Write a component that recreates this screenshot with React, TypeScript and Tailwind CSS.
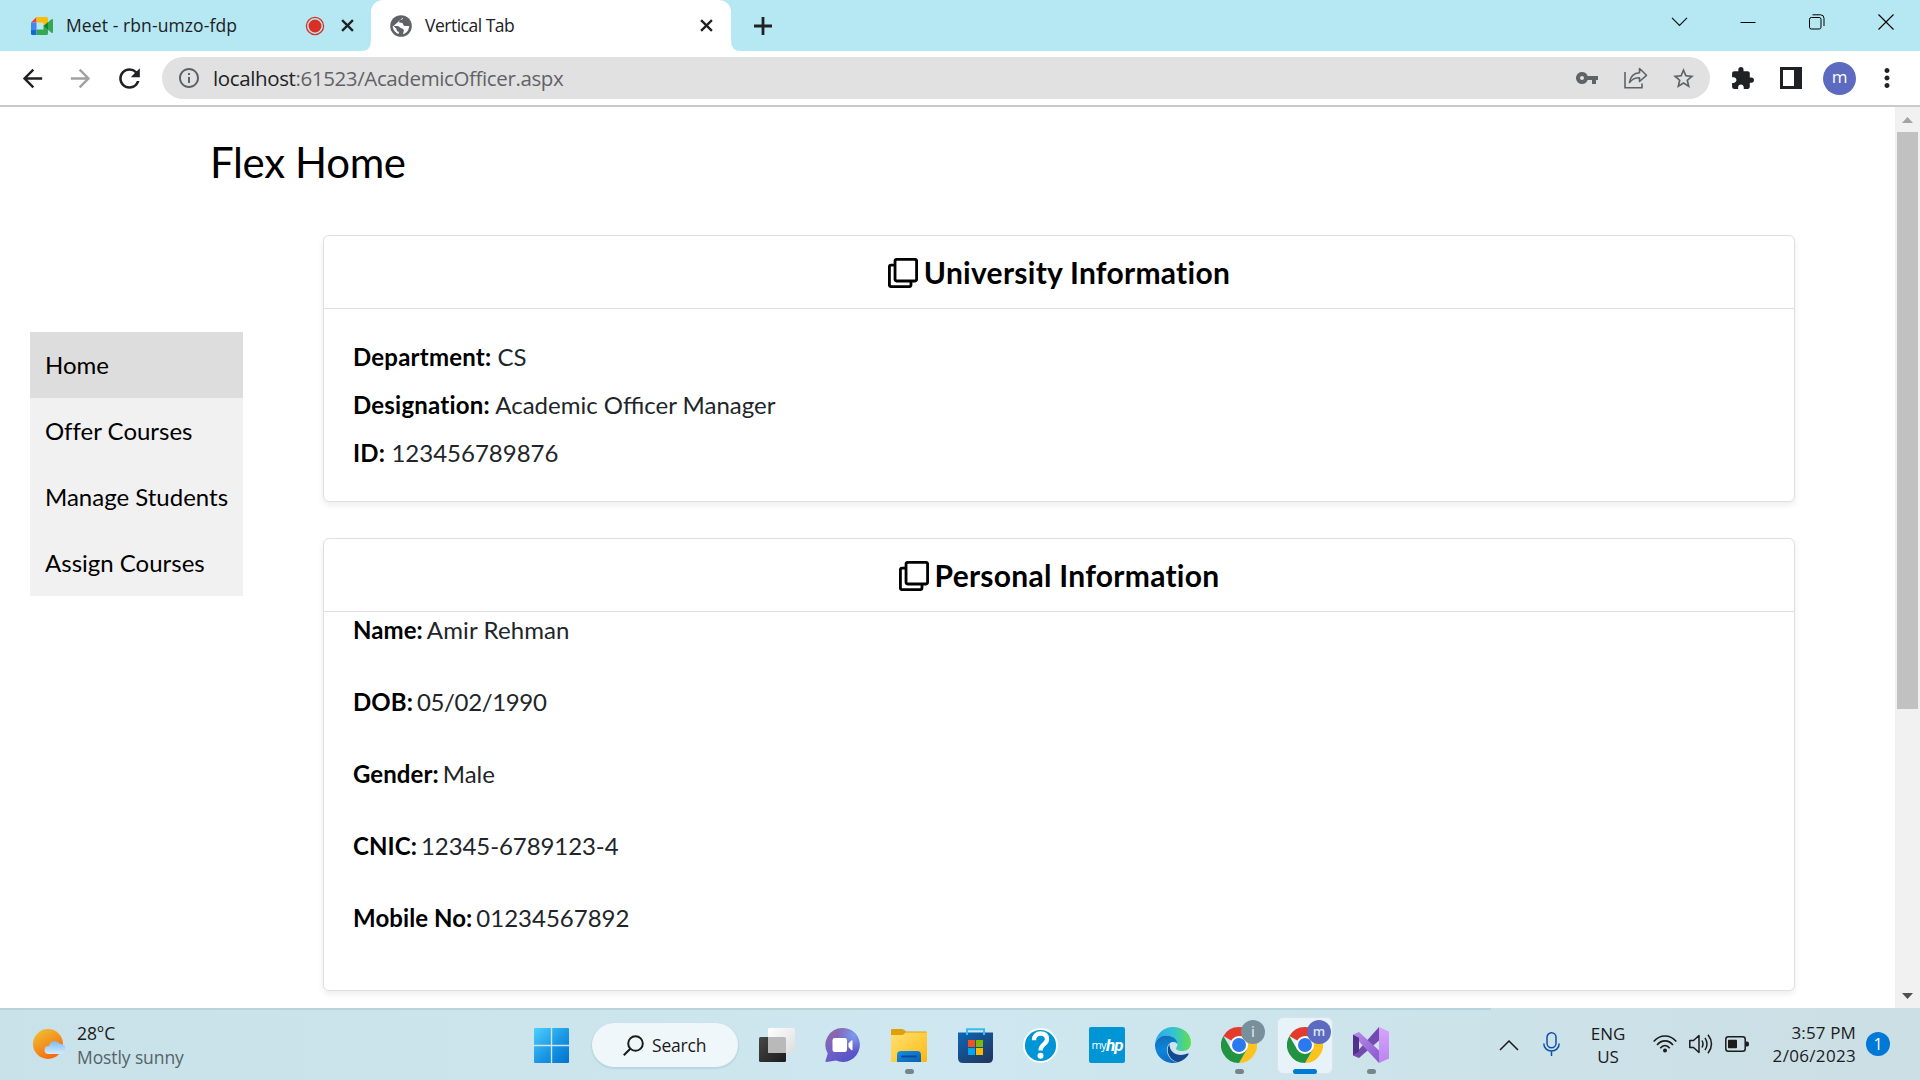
import React from "react";
import {
  MdArrowBack,
  MdArrowForward,
  MdRefresh,
  MdInfoOutline,
  MdVpnKey,
  MdStarBorder,
  MdExtension,
  MdMoreVert,
} from "react-icons/md";
import { FaRegClone } from "react-icons/fa";

const ui = "font-['Open_Sans','Noto_Sans',sans-serif]";

function CrossIcon({ size, stroke }: { size: number; stroke: number }) {
  return (
    <svg width={size} height={size} viewBox="0 0 12 12" className="shrink-0" fill="none" stroke="#202124" strokeWidth={stroke}>
      <path d="M1 1L11 11M11 1L1 11" />
    </svg>
  );
}

function MeetIcon() {
  return (
    <svg width="22" height="18" viewBox="0 0 22 18" className="shrink-0">
      <path d="M0 5.5L5.5 0V5.5Z" fill="#ea4335" />
      <path d="M0 5.5H5.5V12.5H0Z" fill="#4285f4" />
      <path d="M0 12.5H5.5V18H1.5A1.5 1.5 0 0 1 0 16.5Z" fill="#1967d2" />
      <path d="M5.5 0H15.5A1.5 1.5 0 0 1 17 1.5V6L12.5 9.5V5.5H5.5Z" fill="#fbbc04" />
      <path d="M5.5 12.5H12.5V9L17 12.5V16.5A1.5 1.5 0 0 1 15.5 18H5.5Z" fill="#34a853" />
      <path d="M12.5 9L20.5 2.2Q22 1.400 22 3V15Q22 16.600 20.500 15.800Z" fill="#34a853" />
      <path d="M12.500 9L17 5.200V12.800Z" fill="#188038" />
    </svg>
  );
}

function GlobeIcon() {
  return (
    <svg width="22" height="22" viewBox="0 0 22 22" className="shrink-0">
      <circle cx="11" cy="11" r="10.800" fill="#5f6368" />
      <path
        d="M13 2.500C13 4.500 11.500 4.800 9.800 5C8.800 5.200 8.800 7.500 10 7.800C11 8 12.800 7.500 13 9C13.200 10.800 14.500 11 16 11H19.300C19 15 16.500 18.200 13 19.200C13 17.500 14.500 16 13.500 14.500C12.500 13.300 11 13.600 10 12.500C9.200 11 7.500 11 6 11H2.700C2.800 14.500 5 17.800 8.800 19V16.800C7 16.500 6.500 15.500 6.500 14L3.500 11"
        fill="white"
      />
    </svg>
  );
}

function TabStrip() {
  return (
    <div className={"flex h-[51px] w-full items-center bg-[#b5e8f3] text-[18px] text-[#202124] " + ui}>
      <div className="flex h-full w-[371px] items-center pl-[31px]">
        <MeetIcon />
        <span className="ml-[13px] w-[239px] whitespace-nowrap text-[17.5px] tracking-[0.1px]">Meet - rbn-umzo-fdp</span>
        <svg width="20" height="20" viewBox="0 0 20 20" className="shrink-0">
          <circle cx="10" cy="10" r="8.600" fill="none" stroke="#d93025" strokeWidth="1.300" />
          <circle cx="10" cy="10" r="6.500" fill="#d93025" />
        </svg>
        <div className="ml-[16px]">
          <CrossIcon size={13} stroke={2.1} />
        </div>
      </div>
      <div className="relative flex h-full w-[360px] items-center rounded-t-[12px] bg-white pl-[19px]">
        <svg width="10" height="10" viewBox="0 0 10 10" className="absolute bottom-0 -left-[10px]">
          <path d="M10 0V10H0Q10 10 10 0Z" fill="white" />
        </svg>
        <svg width="10" height="10" viewBox="0 0 10 10" className="absolute -right-[10px] bottom-0">
          <path d="M0 0V10H10Q0 10 0 0Z" fill="white" />
        </svg>
        <GlobeIcon />
        <span className="ml-[13px] w-[275px] whitespace-nowrap text-[17.5px] tracking-[-0.5px]">Vertical Tab</span>
        <CrossIcon size={13} stroke={2.1} />
      </div>
      <svg width="18" height="18" viewBox="0 0 18 18" className="ml-[23px] shrink-0" stroke="#202124" strokeWidth="2.800">
        <path d="M9 0V18M0 9H18" />
      </svg>
      <div className="mb-[8px] ml-auto flex items-center pr-[26px]">
        <svg width="17" height="10" viewBox="0 0 17 10" fill="none" stroke="#111" strokeWidth="1.200">
          <path d="M1 0.800L8.500 8.500L16 0.800" />
        </svg>
        <svg width="16" height="16" viewBox="0 0 16 16" className="ml-[52px]" stroke="#000" strokeWidth="1">
          <path d="M0.500 8.500H15.500" />
        </svg>
        <svg width="16" height="16" viewBox="0 0 16 16" className="ml-[53px]" fill="none" stroke="#000" strokeWidth="1">
          <rect x="0.500" y="3.500" width="11.500" height="11.500" rx="1.800" />
          <path d="M3.500 0.800H11.500Q15 0.800 15 4.300V12" />
        </svg>
        <svg width="16" height="16" viewBox="0 0 16 16" className="ml-[53px]" stroke="#000" strokeWidth="1.100">
          <path d="M0.500 0.500L15.500 15.500M15.500 0.500L0.500 15.500" />
        </svg>
      </div>
    </div>
  );
}

function Toolbar() {
  return (
    <div className={"flex h-[56px] w-full items-center border-b-2 border-[#cacaca] bg-white text-[#202124] " + ui}>
      <MdArrowBack size={29} className="ml-[18px] shrink-0" />
      <MdArrowForward size={29} className="ml-[19px] shrink-0 text-[#a0a1a3]" />
      <MdRefresh size={31} className="ml-[19px] shrink-0" />
      <div className="ml-[17px] flex h-[42px] w-[1548px] items-center rounded-full bg-[#e1e1e1] pl-[15px] text-[#5f6368]">
        <MdInfoOutline size={24} className="shrink-0" />
        <span className="ml-[12px] whitespace-nowrap text-[20.5px] tracking-[-0.38px]">
          <span className="text-[#202124]">localhost</span>:61523/AcademicOfficer.aspx
        </span>
        <MdVpnKey size={24} className="ml-auto shrink-0" />
        <svg width="24" height="22" viewBox="0 0 24 22" className="ml-[25px] shrink-0" fill="none" stroke="#5f6368" strokeWidth="1.600">
          <path d="M1 5V20.800H18V16.500" />
          <path d="M5.500 15.500C6.500 9 10 6 15.500 5.700V1.500L22.500 8.300L15.500 14.500V10.700C11 10.700 8 12 5.500 15.500Z" strokeLinejoin="round" />
        </svg>
        <MdStarBorder size={25} className="mr-[14px] ml-[23px] shrink-0" />
      </div>
      <MdExtension size={25} className="ml-[20px] shrink-0" />
      <svg width="22" height="22" viewBox="0 0 22 22" className="ml-[25px] shrink-0">
        <path d="M0 0H22V22H0ZM3 3V19H14V3Z" fill="#202124" fillRule="evenodd" />
      </svg>
      <div className="ml-[21px] flex size-[33px] items-center justify-center rounded-full bg-[#5c6bc0] pb-[2px] text-[17px] text-white">m</div>
      <MdMoreVert size={30} className="ml-[16px] shrink-0" />
    </div>
  );
}

const plain = "[font-variant-ligatures:none]";

function Field({ label, value, tracking = "" }: { label: string; value: string; tracking?: string }) {
  return (
    <p className="h-[48px] whitespace-nowrap">
      <span className={"font-bold tracking-[0.22px] text-black " + plain}>{label}</span> <span className={tracking}>{value}</span>
    </p>
  );
}

function TallField({ label, value, tracking = "" }: { label: string; value: string; tracking?: string }) {
  return (
    <p className="flex h-[72px] gap-[4px] whitespace-nowrap">
      <span className={"font-bold tracking-[0.08px] text-black " + plain}>{label}</span>
      <span className={tracking}>{value}</span>
    </p>
  );
}

function CardHeader({ title }: { title: string }) {
  return (
    <div className="flex h-[73px] items-center justify-center gap-[6px] border-b border-[#dfdfdf] text-black">
      <FaRegClone size={30} className="mt-px" />
      <h3 className={"text-[30px] leading-[36px] font-bold tracking-[0.27px] " + plain}>{title}</h3>
    </div>
  );
}

const cardClass = "w-[1472px] rounded-[6px] border border-[#dfdfdf] bg-white shadow-[0_3px_6px_rgba(0,0,0,0.075)]";

function Page() {
  const links = ["Home", "Offer Courses", "Manage Students", "Assign Courses"];
  return (
    <div className="flex h-[901px] w-full overflow-hidden bg-white font-['Lato',sans-serif] text-[24px] leading-[36px] text-[#212529]">
      <div className="w-[323px] shrink-0">
        <h1 className="ml-[210px] pt-[24px] text-[42px] leading-[63px] tracking-[-0.35px] whitespace-nowrap text-black">Flex Home</h1>
        <nav className={"mt-[138px] ml-[30px] w-[213px] bg-[#f1f1f1] text-black " + plain}>
          {links.map((l, i) => (
            <div key={l} className={"flex h-[66px] items-center pl-[15px] whitespace-nowrap " + (i === 0 ? "bg-[#ddd]" : "")}>
              {l}
            </div>
          ))}
        </nav>
      </div>
      <main className="flex flex-1 flex-col gap-[36px] pt-[128px]">
        <section className={cardClass + " h-[267px]"}>
          <CardHeader title="University Information" />
          <div className="pt-[30px] pl-[29px]">
            <Field label="Department:" value="CS" />
            <Field label="Designation:" value="Academic Officer Manager" />
            <Field label="ID:" value="123456789876" />
          </div>
        </section>
        <section className={cardClass + " h-[453px]"}>
          <CardHeader title="Personal Information" />
          <div className="pl-[29px]">
            <TallField label="Name:" value="Amir Rehman" tracking="tracking-[0.12px]" />
            <TallField label="DOB:" value="05/02/1990" tracking="tracking-[-0.35px]" />
            <TallField label="Gender:" value="Male" />
            <TallField label="CNIC:" value="12345-6789123-4" tracking="tracking-[-0.08px]" />
            <TallField label="Mobile No:" value="01234567892" />
          </div>
        </section>
      </main>
      <div className="flex w-[25px] flex-col items-center bg-[#f1f1f1]">
        <svg width="11" height="6" viewBox="0 0 11 6" className="mt-[10px] shrink-0">
          <path d="M5.500 0L11 6H0Z" fill="#a3a3a3" />
        </svg>
        <div className="mt-[9px] h-[577px] w-[21px] bg-[#c1c1c1]" />
        <svg width="11" height="6" viewBox="0 0 11 6" className="mt-auto mb-[9px] shrink-0">
          <path d="M0 0H11L5.500 6Z" fill="#505050" />
        </svg>
      </div>
    </div>
  );
}

function WeatherIcon() {
  return (
    <svg width="32" height="32" viewBox="0 0 32 32" className="shrink-0">
      <defs>
        <linearGradient id="sun" x1="0.1" y1="0" x2="0.7" y2="1">
          <stop offset="0" stopColor="#efc233" />
          <stop offset="1" stopColor="#f6660c" />
        </linearGradient>
        <linearGradient id="cloud" x1="0" y1="0" x2="0" y2="1">
          <stop offset="0" stopColor="#7cbcf7" />
          <stop offset="1" stopColor="#d3ebff" />
        </linearGradient>
      </defs>
      <circle cx="15" cy="15" r="15" fill="url(#sun)" />
      <path d="M15.500 25A4 4 0 0 1 15.500 17H16A6 5.800 0 0 1 27 15A5 5 0 0 1 28 25Z" fill="url(#cloud)" />
    </svg>
  );
}

function StartIcon() {
  return (
    <svg width="35" height="35" viewBox="0 0 35 35">
      <defs>
        <linearGradient id="win" x1="0" y1="0" x2="1" y2="1">
          <stop offset="0" stopColor="#4cd0ff" />
          <stop offset="0.550" stopColor="#1a96e2" />
          <stop offset="1" stopColor="#0072cf" />
        </linearGradient>
      </defs>
      <path d="M1 0H16.800V16.800H0V1A1 1 0 0 1 1 0ZM18.200 0H34A1 1 0 0 1 35 1V16.800H18.200ZM0 18.200H16.800V35H1A1 1 0 0 1 0 34ZM18.200 18.200H35V34A1 1 0 0 1 34 35H18.200Z" fill="url(#win)" />
    </svg>
  );
}

function TaskViewIcon() {
  return (
    <svg width="36" height="34" viewBox="0 0 36 34">
      <defs>
        <linearGradient id="tvDark" x1="0" y1="0" x2="1" y2="1">
          <stop offset="0" stopColor="#474747" />
          <stop offset="1" stopColor="#1c1c1c" />
        </linearGradient>
        <linearGradient id="tvLight" x1="0" y1="0" x2="1" y2="1">
          <stop offset="0" stopColor="#ffffff" />
          <stop offset="1" stopColor="#dddddd" />
        </linearGradient>
      </defs>
      <rect x="0" y="9" width="27" height="25" rx="1.500" fill="url(#tvDark)" />
      <rect x="9" y="0" width="27" height="25" rx="1.500" fill="url(#tvLight)" />
      <path d="M9 9H25.500A1.500 1.500 0 0 1 27 10.500V25H10.500A1.500 1.500 0 0 1 9 23.500Z" fill="#b9b9b9" />
    </svg>
  );
}

function ChatIcon() {
  return (
    <svg width="35" height="34" viewBox="0 0 35 34" className="mr-[2px]">
      <defs>
        <linearGradient id="chat" x1="0.100" y1="0.100" x2="0.700" y2="1">
          <stop offset="0" stopColor="#9467a8" />
          <stop offset="0.500" stopColor="#6f62c6" />
          <stop offset="1" stopColor="#5252c6" />
        </linearGradient>
        <radialGradient id="chatGlow" cx="0.850" cy="0.200" r="0.500">
          <stop offset="0" stopColor="#7f9df2" />
          <stop offset="1" stopColor="#7f9df2" stopOpacity="0" />
        </radialGradient>
      </defs>
      <path d="M17.500 0A17 17 0 1 1 11 32.600L1.500 34Q0 34 0.600 32.600L2.700 25.500A17 17 0 0 1 17.500 0Z" fill="url(#chat)" />
      <circle cx="17.500" cy="17" r="17" fill="url(#chatGlow)" />
      <rect x="7.500" y="10" width="14.500" height="14" rx="2.200" fill="white" />
      <path d="M23.500 15.500L26.300 12.500Q27.500 11.800 27.500 13V21.500Q27.500 22.700 26.300 22L23.500 19Z" fill="white" />
    </svg>
  );
}

function FolderIcon() {
  return (
    <svg width="36" height="34" viewBox="0 0 36 34">
      <defs>
        <linearGradient id="fold" x1="0" y1="0" x2="1" y2="1">
          <stop offset="0" stopColor="#ffe071" />
          <stop offset="0.600" stopColor="#ffca3a" />
          <stop offset="1" stopColor="#fbb60f" />
        </linearGradient>
        <linearGradient id="foldBlue" x1="0" y1="0" x2="1" y2="1">
          <stop offset="0" stopColor="#1490df" />
          <stop offset="1" stopColor="#0a5fb5" />
        </linearGradient>
      </defs>
      <path d="M0 2Q0 1 1 1H11Q13 1 15 3.500H35Q36 3.500 36 5V10H0Z" fill="#e09f04" />
      <path d="M0 7H10.500Q12.500 7 14.500 4.500H36V32.500Q36 34 35 34H1Q0 34 0 32.500Z" fill="url(#fold)" />
      <path d="M6 34V27Q6 23 10 23H26Q30 23 30 27V34Z" fill="url(#foldBlue)" />
      <path d="M11 28.500H25" stroke="#0a4a94" strokeWidth="1.800" strokeLinecap="round" />
    </svg>
  );
}

function StoreIcon() {
  return (
    <svg width="35" height="35" viewBox="0 0 35 35">
      <defs>
        <linearGradient id="bag" x1="0" y1="0" x2="0.800" y2="1">
          <stop offset="0" stopColor="#0b67b8" />
          <stop offset="1" stopColor="#22375f" />
        </linearGradient>
      </defs>
      <path d="M0 4.500H35V30Q35 35 30 35H5Q0 35 0 30Z" fill="url(#bag)" />
      <path d="M9 7V1.200H26V7" fill="none" stroke="#35bdf0" strokeWidth="2" />
      <path d="M10 12H17V19H10Z" fill="#f25022" />
      <path d="M18 12H25V19H18Z" fill="#7fba00" />
      <path d="M10 20H17V27H10Z" fill="#00a4ef" />
      <path d="M18 20H25V27H18Z" fill="#ffb900" />
    </svg>
  );
}

function HelpIcon() {
  return (
    <svg width="35" height="35" viewBox="0 0 35 35" className="mr-px">
      <circle cx="17.500" cy="17.500" r="16.500" fill="#0096d6" stroke="white" strokeWidth="1.800" />
      <path d="M11 12.300C11 7.800 13.500 5.500 17.500 5.500C21.500 5.500 24 7.500 24 11.300C24 16.500 17.500 16 17.500 22.500" fill="none" stroke="white" strokeWidth="4.300" />
      <circle cx="17.500" cy="27.800" r="3" fill="white" />
    </svg>
  );
}

function EdgeIcon() {
  return (
    <svg width="36" height="36" viewBox="0 0 36 36">
      <defs>
        <linearGradient id="edTop" x1="0" y1="0.500" x2="1" y2="0.500">
          <stop offset="0" stopColor="#2ba7e8" />
          <stop offset="0.500" stopColor="#33c2d6" />
          <stop offset="1" stopColor="#5fe04a" />
        </linearGradient>
        <linearGradient id="edLeft" x1="0.300" y1="0" x2="0.500" y2="1">
          <stop offset="0" stopColor="#0f6fb6" />
          <stop offset="0.500" stopColor="#0a86dc" />
          <stop offset="1" stopColor="#0f6cc6" />
        </linearGradient>
      </defs>
      <path d="M0 17C1 7 8.500 0 18 0C28.500 0 36 7 36 15.500C36 20.500 32.500 24 27.500 24C23.500 24 21 22.800 21 21.500C21 20.500 22.500 20 22.500 17.500C22.500 12.500 17 8.500 11 8.500C6 8.500 2 11.500 0 17Z" fill="url(#edTop)" />
      <path d="M0 17C2 11.500 6 8.500 11 8.500C17.500 8.500 22.500 12.500 22.500 17C20.500 13.500 13.500 14 12 21C11 28 16 34.500 23 35.300C20 36.200 17 36 15 35.700C6 34.200 -0.500 26.500 0 17Z" fill="url(#edLeft)" />
      <path d="M14.500 17C10 23 14 33.500 23 35.300C27.500 34 31.500 31 33.500 27.500C34 26.500 33.300 26.200 32.500 26.600C25 30 14.500 27.500 14.500 17Z" fill="#114a8f" />
    </svg>
  );
}

function ChromeIcon() {
  return (
    <svg width="36" height="36" viewBox="0 0 36 36">
      <path d="M18 18L2.410 9A18 18 0 0 1 33.590 9Z" fill="#e33b2e" />
      <path d="M18 9H33.590A18 18 0 0 1 18 36L25.800 22.500Z" fill="#fcc31e" />
      <path d="M10.200 22.500L2.410 9A18 18 0 0 0 18 36L25.800 22.500Z" fill="#229342" />
      <circle cx="18" cy="18" r="9" fill="white" />
      <circle cx="18" cy="18" r="7" fill="#2a79ee" />
    </svg>
  );
}

function VisualStudioIcon() {
  return (
    <svg width="36" height="36" viewBox="0 0 36 36">
      <defs>
        <linearGradient id="vsBand" x1="0" y1="0" x2="1" y2="1">
          <stop offset="0" stopColor="#b98be8" />
          <stop offset="1" stopColor="#8a57cf" />
        </linearGradient>
        <linearGradient id="vsRight" x1="0" y1="0" x2="0" y2="1">
          <stop offset="0" stopColor="#d7a4ff" />
          <stop offset="1" stopColor="#bb85ee" />
        </linearGradient>
      </defs>
      <path d="M0 7.500L6 10.500V25.500L0 28.500Z" fill="#52318a" />
      <path d="M0 28.500L6 31L26 13.500V0L6 22.500V25Z" fill="#7449b0" />
      <path d="M0 7.500L6 5L26 23.500V36L6 14.500V10.500Z" fill="url(#vsBand)" />
      <path d="M26 0L36 4.500V31.500L26 36Z" fill="url(#vsRight)" />
    </svg>
  );
}

function Slot({ children, mark, active }: { children: React.ReactNode; mark?: boolean; active?: boolean }) {
  return (
    <div className="relative flex h-[72px] w-[66px] shrink-0 items-center justify-center">
      {active && <div className="absolute inset-x-[5px] top-[8px] h-[57px] rounded-[6px] border border-[#d6e5ec] bg-[#e7f3f8]" />}
      <div className="relative">{children}</div>
      {mark && <div className="absolute top-[60px] h-[5px] w-[9px] rounded-full bg-[#76858a]" />}
      {active && <div className="absolute top-[60px] h-[5px] w-[24px] rounded-full bg-[#0078d7]" />}
    </div>
  );
}

function Taskbar() {
  return (
    <div className={"relative flex h-[72px] w-full items-center bg-linear-to-r from-[#c9e1e8] via-[#cee7f0] to-[#cbdfe4] pt-[2px] text-[17.500px] leading-[24px] text-[#1b1b1b] " + ui}>
      <div className="absolute top-0 left-0 h-[2px] w-[1491px] bg-[#b9d3db]" />
      <div className="flex w-[518px] items-center pl-[33px]">
        <WeatherIcon />
        <div className="ml-[12px] leading-[24px] tracking-[-0.1px] whitespace-nowrap">
          <div>28°C</div>
          <div className="text-[#566368]">Mostly sunny</div>
        </div>
      </div>
      <Slot>
        <StartIcon />
      </Slot>
      <div className="mr-[6px] ml-[8px] flex h-[44px] w-[146px] items-center rounded-full bg-[#eff7fa] pl-[31px] shadow-[0_1px_1px_1px_rgba(150,190,200,0.35)]">
        <svg width="21" height="21" viewBox="0 0 21 21" fill="none" stroke="#1b1b1b" strokeWidth="2">
          <circle cx="12.500" cy="8.500" r="7.300" />
          <path d="M7.300 13.700L0.800 20.200" />
        </svg>
        <span className="ml-[8px] tracking-[-0.2px]">Search</span>
      </div>
      <div className="flex">
        <Slot>
          <TaskViewIcon />
        </Slot>
        <Slot>
          <ChatIcon />
        </Slot>
        <Slot mark>
          <FolderIcon />
        </Slot>
        <Slot>
          <StoreIcon />
        </Slot>
        <Slot>
          <HelpIcon />
        </Slot>
        <Slot>
          <div className="flex size-[36px] items-center justify-center rounded-[2px] bg-[#0096d6] text-white">
            <span className="text-[11px] tracking-[-0.5px]">my</span>
            <span className="font-['Roboto',sans-serif] text-[17px] font-bold tracking-[-1px] italic">hp</span>
          </div>
        </Slot>
        <Slot>
          <EdgeIcon />
        </Slot>
        <Slot mark>
          <ChromeIcon />
          <div className="absolute -top-[7px] left-[20px] flex size-[24px] items-center justify-center rounded-full bg-[#78909c] text-[14px] font-semibold text-[#d5dde1]">i</div>
        </Slot>
        <Slot active>
          <ChromeIcon />
          <div className="absolute -top-[7px] left-[20px] flex size-[24px] items-center justify-center rounded-full bg-[#5c6bc0] pb-[2px] text-[13px] font-semibold text-[#dfe2f5]">m</div>
        </Slot>
        <Slot mark>
          <VisualStudioIcon />
        </Slot>
      </div>
      <svg width="20" height="11" viewBox="0 0 20 11" className="ml-[95px] shrink-0" fill="none" stroke="#1b1b1b" strokeWidth="1.500">
        <path d="M1 10L10 1L19 10" />
      </svg>
      <svg width="17" height="24" viewBox="0 0 17 24" className="mb-[2px] ml-[24px] shrink-0" fill="none" stroke="#0f4fa8" strokeWidth="1.500">
        <rect x="4" y="0.800" width="9" height="15" rx="4.500" />
        <path d="M0.800 11.500C0.800 21.500 16.200 21.500 16.200 11.500M8.500 19V24" />
      </svg>
      <div className="ml-[28px] w-[40px] text-center text-[17px] leading-[23px]">
        <div>ENG</div>
        <div>US</div>
      </div>
      <svg width="24" height="18" viewBox="0 0 24 18" className="mb-[3px] ml-[25px] shrink-0" fill="none" stroke="#1b1b1b" strokeWidth="1.600">
        <path d="M0.700 6.500C7 -0.800 17 -0.800 23.300 6.500M4 10C8.500 4.500 15.500 4.500 20 10M7.300 13.300C10 9.500 14 9.500 16.700 13.300" />
        <circle cx="12" cy="15.500" r="2" fill="#1b1b1b" stroke="none" />
      </svg>
      <svg width="24" height="20" viewBox="0 0 24 20" className="mb-[3px] ml-[12px] shrink-0" fill="none" stroke="#1b1b1b" strokeWidth="1.500">
        <path d="M0.800 6.500H4.500L10 1.500V18.500L4.500 13.500H0.800Z" strokeLinejoin="round" />
        <path d="M13 6.500Q15 10 13 13.500M16 3.800Q20 10 16 16.200M19 0.800Q26 10 19 19.200" />
      </svg>
      <svg width="24" height="16" viewBox="0 0 24 16" className="mb-[3px] ml-[12px] shrink-0">
        <rect x="0.800" y="0.800" width="19.400" height="14.400" rx="2.500" fill="none" stroke="#1b1b1b" strokeWidth="1.500" />
        <rect x="3" y="3.700" width="9" height="8.600" rx="0.800" fill="#1b1b1b" />
        <path d="M21 5.500H22.500Q24 5.500 24 8Q24 10.500 22.500 10.500H21Z" fill="#1b1b1b" />
      </svg>
      <div className="mb-[2px] w-[107px] text-right text-[17px] leading-[23px] whitespace-nowrap">
        <div className="tracking-[0.150px]">3:57 PM</div>
        <div className="tracking-[0.320px]">2/06/2023</div>
      </div>
      <div className="mb-[2px] ml-[10px] flex size-[24px] items-center justify-center rounded-full bg-[#0078d7] text-[16px] text-white">1</div>
    </div>
  );
}

export default function App() {
  return (
    <div className="flex h-[1080px] w-[1920px] flex-col overflow-hidden">
      <TabStrip />
      <Toolbar />
      <Page />
      <Taskbar />
    </div>
  );
}
